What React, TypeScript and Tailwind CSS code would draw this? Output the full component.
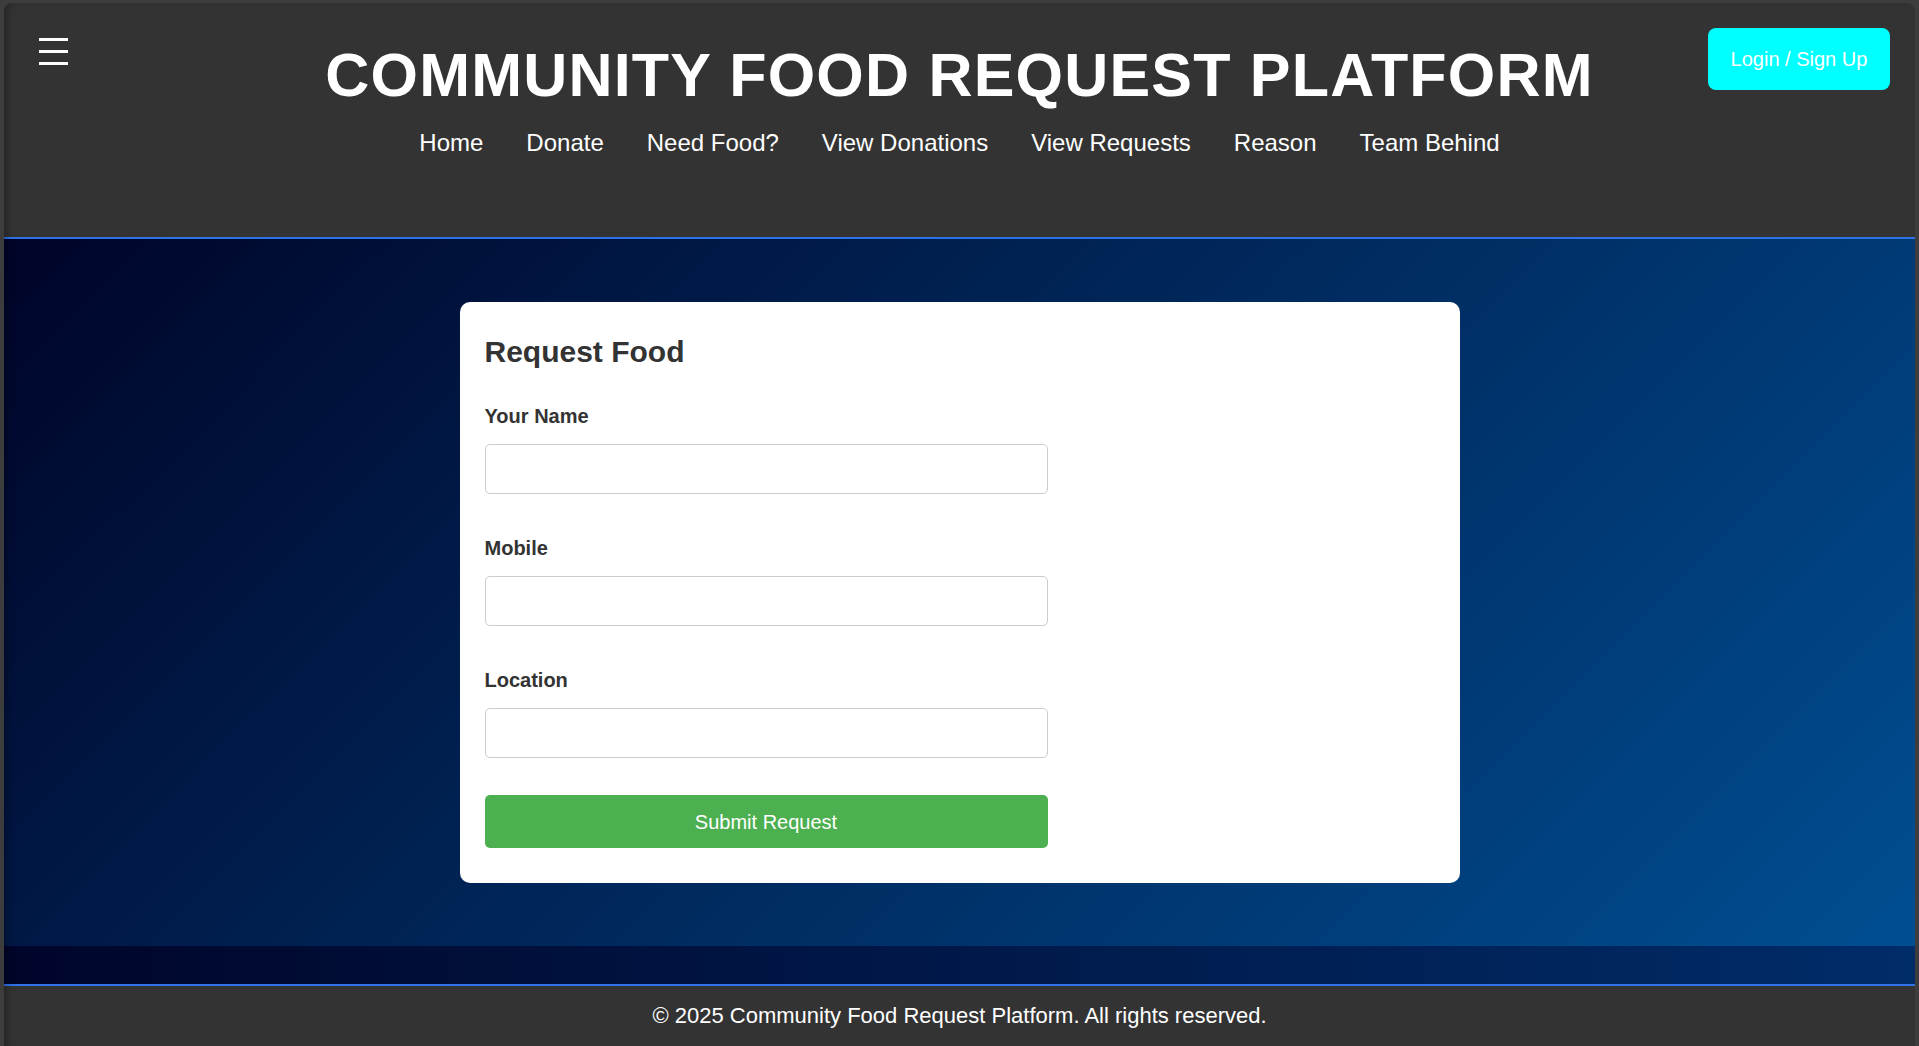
import React from "react";

const links = ["Home", "Donate", "Need Food?", "View Donations", "View Requests", "Reason", "Team Behind"];
const fields = ["Your Name", "Mobile", "Location"];

const App = () => {
  return (
    <div className="h-screen w-full overflow-hidden bg-[#3d3d3d] px-[4px] pt-[3px] font-['Liberation_Sans',Arial,sans-serif]">
      <div className="relative flex h-full flex-col overflow-hidden rounded-t-[8px]">
        {/* Header */}
        <header className="relative h-[236px] shrink-0 border-b-2 border-[#2f72e6] bg-[#333333] pt-[37px]">
          {/* Hamburger */}
          <div className="absolute left-[35px] top-[35px] flex cursor-pointer flex-col gap-[9px]">
            <span className="block h-[3px] w-[29px] bg-white" />
            <span className="block h-[3px] w-[29px] bg-white" />
            <span className="block h-[3px] w-[29px] bg-white" />
          </div>

          {/* Login */}
          <button className="absolute right-[25px] top-[25px] flex h-[62px] w-[182px] items-center justify-center rounded-[8px] bg-[#00ffff] text-[20px] text-white">
            Login / Sign Up
          </button>

          <div className="flex flex-col items-center">
            <h1 className="text-[61px] font-bold leading-[71px] tracking-[1.2px] text-white">
              COMMUNITY FOOD REQUEST PLATFORM
            </h1>
            <nav className="mt-[18px]">
              <ul className="flex gap-[43px]">
                {links.map((l) => (
                  <li key={l} className="cursor-pointer text-[24px] leading-[28px] text-white">
                    {l}
                  </li>
                ))}
              </ul>
            </nav>
          </div>
        </header>

        {/* Main */}
        <main className="shrink-0 bg-[linear-gradient(135deg,#000428,#004e92)] py-[63px]">
          <div className="mx-auto w-[1000px] rounded-[10px] bg-white px-[25px] pb-[35px] pt-[33px]">
            <h2 className="text-[30px] font-bold leading-[34px] text-[#333333]">Request Food</h2>
            <form onSubmit={(e) => e.preventDefault()}>
              {fields.map((f, i) => (
                <div key={f} className={i === 0 ? "mt-[36px]" : "mt-[43px]"}>
                  <label className="block text-[20px] font-bold leading-[22px] text-[#333333]">{f}</label>
                  <input
                    type="text"
                    className="mt-[17px] block h-[50px] w-[563px] rounded-[5px] border border-[#cccccc] bg-white px-3 outline-none"
                  />
                </div>
              ))}
              <button
                type="submit"
                className="mt-[37px] flex h-[53px] w-[563px] items-center justify-center rounded-[5px] bg-[#4caf50] text-[20px] text-white"
              >
                Submit Request
              </button>
            </form>
          </div>
        </main>

        {/* Body strip below main */}
        <div className="h-[38px] shrink-0 bg-[linear-gradient(to_right,#00052a,#002c68)]" />

        {/* Footer */}
        <footer className="flex-1 border-t-2 border-[#2f72e6] bg-[#333333] pt-[17px] text-center">
          <p className="text-[22px] leading-[26px] text-white">
            © 2025 Community Food Request Platform. All rights reserved.
          </p>
        </footer>

        {/* window edge shading */}
        <div className="pointer-events-none absolute inset-0 rounded-t-[8px] shadow-[inset_8px_0_8px_-6px_rgba(0,0,0,0.35)]" />
      </div>
    </div>
  );
};

export default App;
